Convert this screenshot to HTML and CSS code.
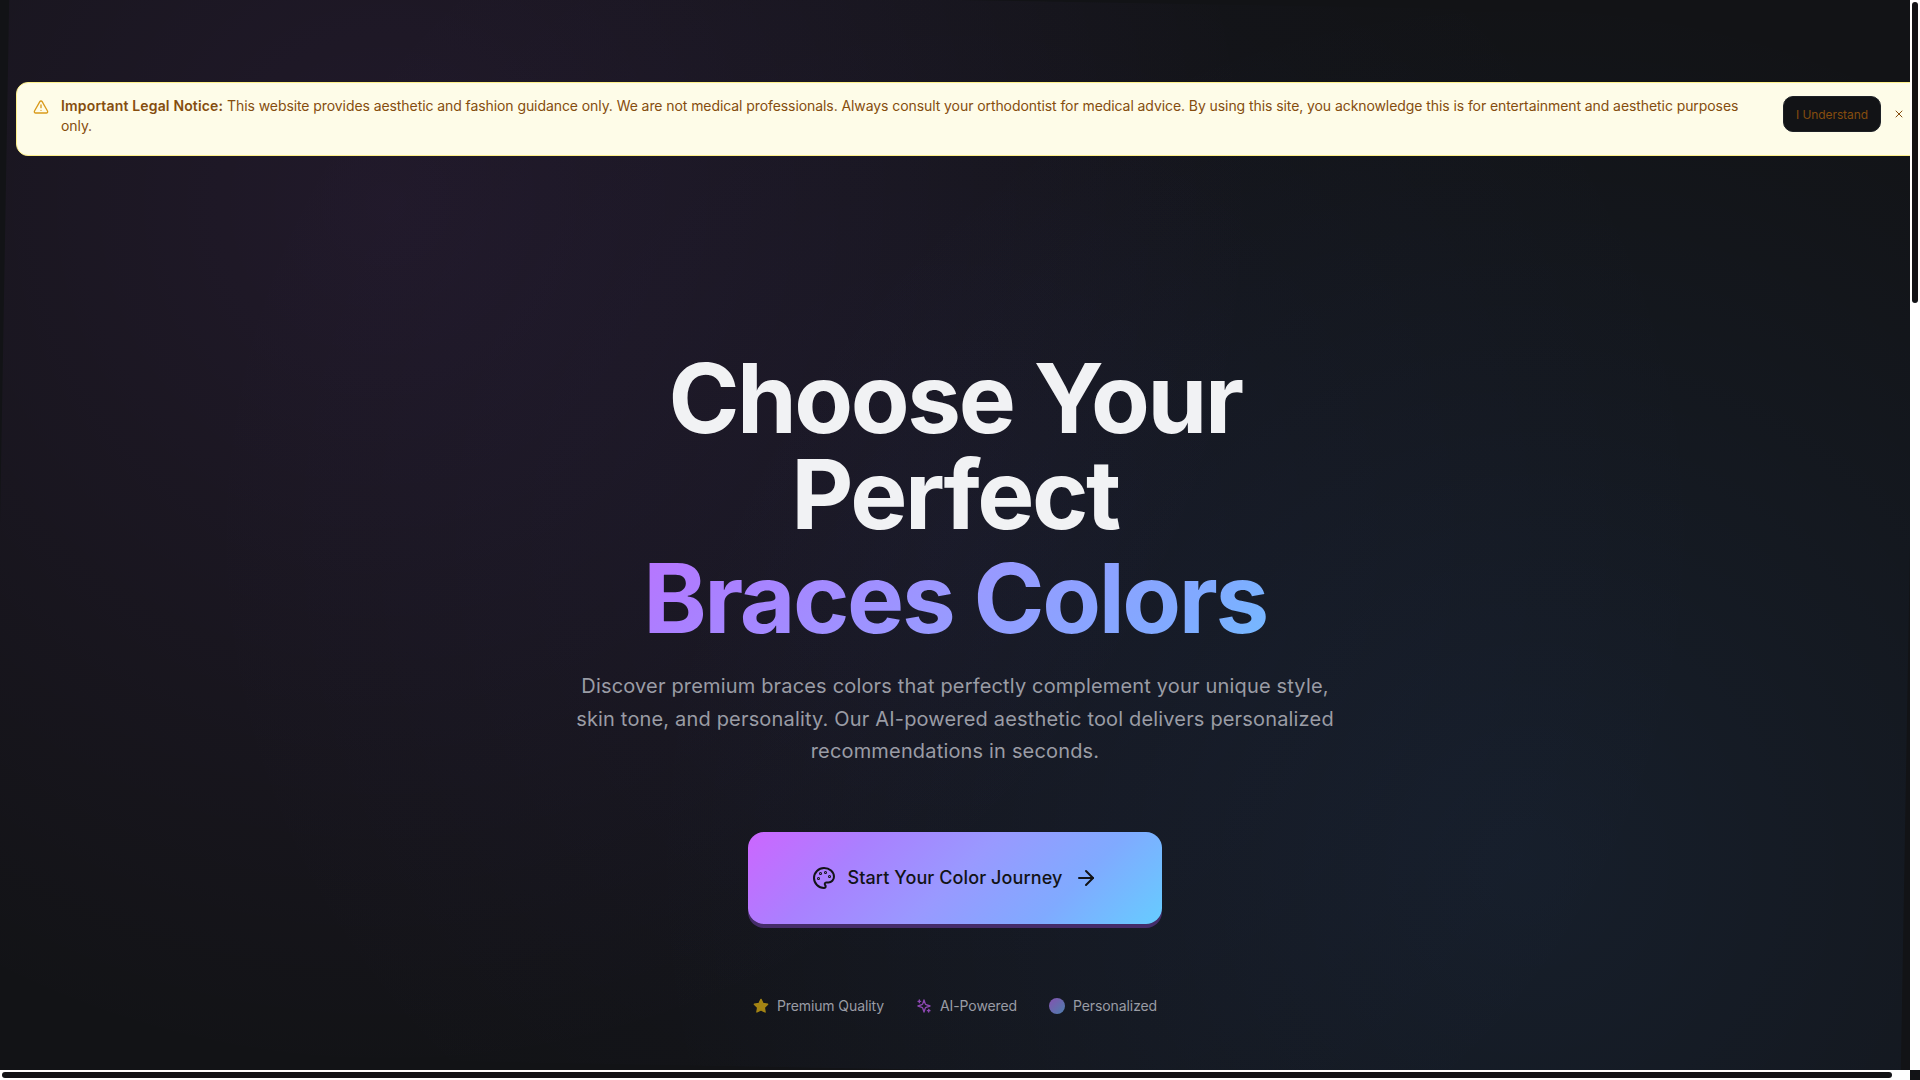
FILE: index.html
```html
<!DOCTYPE html>
<html lang="en">
<head>
  <meta charset="UTF-8">
  <meta name="viewport" content="width=device-width, initial-scale=1.0">
  <title>Braces Colors</title>
  <link rel="stylesheet" href="styles.css">
</head>
<body>
  <div class="window">
    <main class="page">
      <div class="backdrop"></div>

      <div class="notice">
        <svg class="notice-icon" viewBox="0 0 24 24"><path d="m21.73 18-8-14a2 2 0 0 0-3.48 0l-8 14A2 2 0 0 0 4 21h16a2 2 0 0 0 1.73-3"/><path d="M12 9v4"/><path d="M12 17h.01"/></svg>
        <p class="notice-text"><strong>Important Legal Notice:</strong> This website provides aesthetic and fashion guidance only. We are not medical professionals. Always consult your orthodontist for medical advice. By using this site, you acknowledge this is for entertainment and aesthetic purposes only.</p>
        <div class="notice-actions">
          <button class="understand-btn">I Understand</button>
          <button class="close-btn" aria-label="Close"><svg viewBox="0 0 24 24"><path d="M18 6 6 18"/><path d="m6 6 12 12"/></svg></button>
        </div>
      </div>

      <section class="hero">
        <h1>Choose Your Perfect <span class="gradient-text">Braces Colors</span></h1>
        <p class="subtitle">Discover premium braces colors that perfectly complement your unique style, skin tone, and personality. Our AI-powered aesthetic tool delivers personalized recommendations in seconds.</p>
        <button class="start-btn">
          <svg viewBox="0 0 24 24"><circle cx="13.5" cy="6.5" r=".5"/><circle cx="17.5" cy="10.5" r=".5"/><circle cx="8.5" cy="7.5" r=".5"/><circle cx="6.5" cy="12.5" r=".5"/><path d="M12 2C6.5 2 2 6.5 2 12s4.5 10 10 10c.926 0 1.648-.746 1.648-1.688 0-.437-.18-.835-.437-1.125-.29-.289-.438-.652-.438-1.125a1.64 1.64 0 0 1 1.668-1.668h1.996c3.051 0 5.555-2.503 5.555-5.554C21.965 6.012 17.461 2 12 2z"/></svg>
          <span>Start Your Color Journey</span>
          <svg viewBox="0 0 24 24"><path d="M5 12h14"/><path d="m12 5 7 7-7 7"/></svg>
        </button>
        <ul class="features">
          <li><svg class="star" viewBox="0 0 24 24"><path d="m12 2 3.09 6.26L22 9.27l-5 4.87 1.18 6.88L12 17.77l-6.18 3.25L7 14.14 2 9.27l6.91-1.01L12 2z"/></svg>Premium Quality</li>
          <li><svg class="sparkles" viewBox="0 0 24 24"><path d="m12 3-1.912 5.813a2 2 0 0 1-1.275 1.275L3 12l5.813 1.912a2 2 0 0 1 1.275 1.275L12 21l1.912-5.813a2 2 0 0 1 1.275-1.275L21 12l-5.813-1.912a2 2 0 0 1-1.275-1.275L12 3Z"/><path d="M5 3v4"/><path d="M19 17v4"/><path d="M3 5h4"/><path d="M17 19h4"/></svg>AI-Powered</li>
          <li><span class="dot"></span>Personalized</li>
        </ul>
      </section>
    </main>
    <div class="scroll-y"><div class="thumb"></div></div>
    <div class="scroll-x"><div class="thumb"></div></div>
    <div class="corner"></div>
  </div>
</body>
</html>
```
FILE: styles.css
```css
* {
  box-sizing: border-box;
  margin: 0;
  padding: 0;
}

body {
  font-family: Inter, sans-serif;
  background-color: #121316;
  color: #f1f2f4;
  overflow: hidden;
}

button {
  font-family: inherit;
  border: none;
  cursor: pointer;
}

svg {
  fill: none;
  stroke: currentColor;
  stroke-width: 2;
  stroke-linecap: round;
  stroke-linejoin: round;
  flex-shrink: 0;
}

.window {
  display: grid;
  grid-template-columns: 1fr 10px;
  grid-template-rows: 1fr 10px;
  width: 100vw;
  height: 100vh;
}

.page {
  position: relative;
  overflow: hidden;
  padding-top: 82px;
  background-color: #121316;
}

.backdrop {
  position: absolute;
  inset: 0;
  transform: rotate(1deg);
  background:
    radial-gradient(circle at 20% 20%, rgba(190, 90, 255, 0.085) 0%, transparent 50%),
    radial-gradient(circle at 80% 80%, rgba(64, 145, 255, 0.09) 0%, transparent 50%),
    radial-gradient(circle at 50% 50%, rgba(102, 102, 255, 0.045) 0%, transparent 70%);
}

/* legal notice */
.notice {
  position: relative;
  display: flex;
  width: 1910px;
  height: 74px;
  margin-left: 16px;
  padding: 13px 16px;
  border: 1px solid #fef08a;
  border-radius: 12px;
  background-color: #fefce8;
  color: #854d0e;
}

.notice-icon {
  width: 16px;
  height: 16px;
  margin: 3px 12px 0 0;
  color: #d99a1b;
}

.notice-text {
  width: 1690px;
  font-size: 14px;
  line-height: 20px;
  letter-spacing: -0.078px;
}

.notice-text strong {
  font-weight: 600;
  letter-spacing: 0.16px;
}

.notice-actions {
  display: flex;
  align-items: center;
  gap: 12px;
  height: 36px;
  margin-left: 32px;
}

.understand-btn {
  width: 98px;
  height: 36px;
  border: 1px solid #1d2026;
  border-radius: 10px;
  background-color: #121316;
  color: #854d0e;
  font-size: 12px;
  letter-spacing: -0.1px;
}

.close-btn {
  display: flex;
  background: none;
  color: #854d0e;
}

.close-btn svg {
  width: 12px;
  height: 12px;
}

/* hero */
.hero {
  position: relative;
  display: flex;
  flex-direction: column;
  align-items: center;
  padding-top: 194px;
  text-align: center;
}

h1 {
  width: 896px;
  font-size: 96px;
  font-weight: 700;
  line-height: 96px;
  letter-spacing: -0.025em;
}

.gradient-text,
.start-btn {
  background: linear-gradient(135deg, #cc66ff 0%, #aa80ff 25%, #9999ff 50%, #80aaff 75%, #66ccff 100%);
}

.gradient-text {
  display: block;
  margin-top: 8px;
  -webkit-background-clip: text;
  background-clip: text;
  color: transparent;
}

.subtitle {
  width: 768px;
  margin-top: 24px;
  color: #9a9ca5;
  font-size: 20px;
  line-height: 32.5px;
  letter-spacing: 0.17px;
}

.start-btn {
  display: flex;
  align-items: center;
  justify-content: center;
  gap: 12px;
  width: 414px;
  height: 92px;
  margin-top: 64px;
  border-radius: 16px;
  box-shadow: 0 4px 0 #452c69;
  color: #121316;
  font-size: 18px;
  font-weight: 500;
  letter-spacing: 0.1px;
}

.start-btn svg {
  width: 24px;
  height: 24px;
}

.features {
  display: flex;
  gap: 32px;
  margin-top: 72px;
  list-style: none;
  color: #9a9ca5;
  font-size: 14px;
  line-height: 20px;
  letter-spacing: -0.1px;
}

.features li {
  display: flex;
  align-items: center;
  gap: 8px;
}

.features svg {
  width: 16px;
  height: 16px;
}

.star {
  color: #a58514;
  fill: #a58514;
}

.sparkles {
  color: #8d48b2;
}

.dot {
  width: 16px;
  height: 16px;
  border-radius: 50%;
  background: linear-gradient(135deg, #8552b0, #4c80ad);
}

/* scrollbars */
.scroll-y,
.scroll-x {
  padding: 2px;
  background-color: #fff;
}

.thumb {
  border-radius: 3px;
  background-color: #121316;
}

.scroll-y .thumb {
  width: 6px;
  height: 301px;
}

.scroll-x .thumb {
  width: 1890px;
  height: 6px;
}

.corner {
  background-color: #121316;
}
```
